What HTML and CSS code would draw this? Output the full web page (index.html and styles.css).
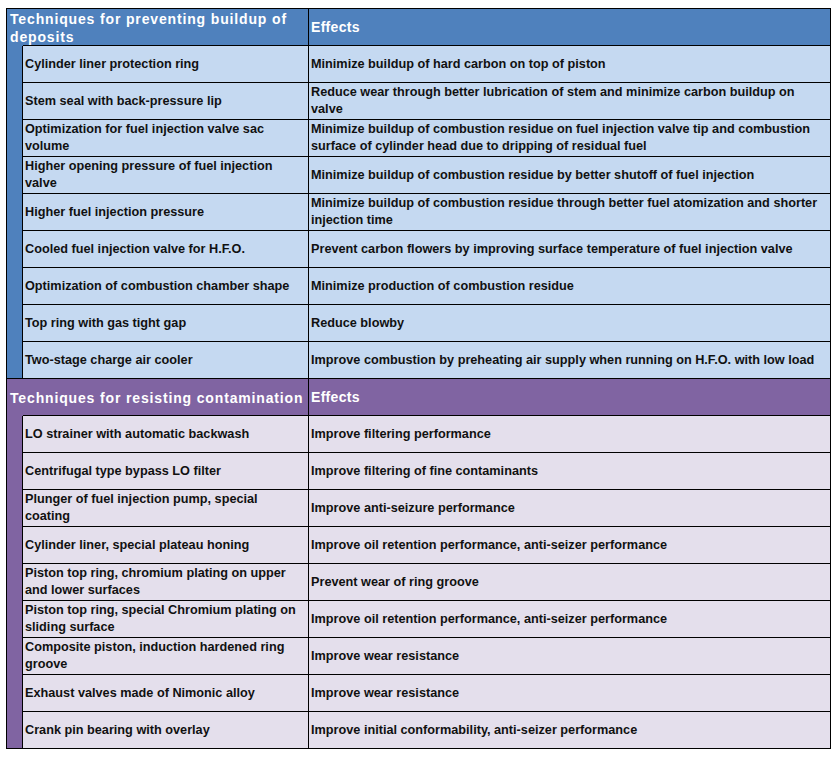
FILE: index.html
```html
<!DOCTYPE html>
<html lang="en">
<head>
<meta charset="utf-8">
<title>Techniques</title>
<link rel="stylesheet" href="styles.css">
</head>
<body>
<table class="grid">
  <colgroup>
    <col class="c-strip">
    <col class="c-tech">
    <col class="c-eff">
  </colgroup>
  <tbody class="sec blue">
    <tr class="head">
      <th colspan="2" class="h-tech">Techniques for preventing buildup of deposits</th>
      <th class="h-eff">Effects</th>
    </tr>
    <tr>
      <td class="strip" rowspan="9"></td>
      <td>Cylinder liner protection ring</td>
      <td>Minimize buildup of hard carbon on top of piston</td>
    </tr>
    <tr>
      <td>Stem seal with back-pressure lip</td>
      <td>Reduce wear through better lubrication of stem and minimize carbon buildup on valve</td>
    </tr>
    <tr>
      <td>Optimization for fuel injection valve sac volume</td>
      <td>Minimize buildup of combustion residue on fuel injection valve tip and combustion surface of cylinder head due to dripping of residual fuel</td>
    </tr>
    <tr>
      <td>Higher opening pressure of fuel injection valve</td>
      <td>Minimize buildup of combustion residue by better shutoff of fuel injection</td>
    </tr>
    <tr>
      <td>Higher fuel injection pressure</td>
      <td>Minimize buildup of combustion residue through better fuel atomization and shorter injection time</td>
    </tr>
    <tr>
      <td>Cooled fuel injection valve for H.F.O.</td>
      <td>Prevent carbon flowers by improving surface temperature of fuel injection valve</td>
    </tr>
    <tr>
      <td>Optimization of combustion chamber shape</td>
      <td>Minimize production of combustion residue</td>
    </tr>
    <tr>
      <td>Top ring with gas tight gap</td>
      <td>Reduce blowby</td>
    </tr>
    <tr>
      <td>Two-stage charge air cooler</td>
      <td class="nowrap">Improve combustion by preheating air supply when running on H.F.O. with low load</td>
    </tr>
  </tbody>
  <tbody class="sec purple">
    <tr class="head">
      <th colspan="2" class="h-tech">Techniques for resisting contamination</th>
      <th class="h-eff">Effects</th>
    </tr>
    <tr>
      <td class="strip" rowspan="9"></td>
      <td>LO strainer with automatic backwash</td>
      <td>Improve filtering performance</td>
    </tr>
    <tr>
      <td>Centrifugal type bypass LO filter</td>
      <td>Improve filtering of fine contaminants</td>
    </tr>
    <tr>
      <td>Plunger of fuel injection pump, special coating</td>
      <td>Improve anti-seizure performance</td>
    </tr>
    <tr>
      <td>Cylinder liner, special plateau honing</td>
      <td>Improve oil retention performance, anti-seizer performance</td>
    </tr>
    <tr>
      <td>Piston top ring, chromium plating on upper and lower surfaces</td>
      <td>Prevent wear of ring groove</td>
    </tr>
    <tr>
      <td>Piston top ring, special Chromium plating on sliding surface</td>
      <td>Improve oil retention performance, anti-seizer performance</td>
    </tr>
    <tr>
      <td>Composite piston, induction hardened ring groove</td>
      <td>Improve wear resistance</td>
    </tr>
    <tr>
      <td>Exhaust valves made of Nimonic alloy</td>
      <td>Improve wear resistance</td>
    </tr>
    <tr>
      <td>Crank pin bearing with overlay</td>
      <td>Improve initial conformability, anti-seizer performance</td>
    </tr>
  </tbody>
</table>
</body>
</html>
```
FILE: styles.css
```css
html, body {
  margin: 0;
  padding: 0;
  background: #ffffff;
}
body {
  padding: 8px 0 0 6px;
  font-family: "Liberation Sans", Arial, sans-serif;
}
.grid {
  border-collapse: separate;
  border-spacing: 0;
  table-layout: fixed;
  width: 825px;
  border-top: 1px solid #000;
  border-left: 1px solid #000;
}
.c-strip { width: 16px; }
.c-tech { width: 286px; }
.c-eff { width: 522px; }

.grid tr { height: 37px; }
.grid td, .grid th {
  box-sizing: border-box;
  border-right: 1px solid #000;
  border-bottom: 1px solid #000;
  padding: 0 2px 0 2px;
  vertical-align: middle;
  text-align: left;
  font-size: 12.7px;
  line-height: 17px;
  font-weight: bold;
  color: #111;
  overflow: visible;
}
.grid td.nowrap { white-space: nowrap; }

.grid th {
  color: #fff;
  font-size: 14px;
  line-height: 18px;
}
.grid th.h-tech {
  border-right: 1px solid #000;
  border-bottom: none;
  padding-left: 3px;
  padding-right: 2px;
  letter-spacing: 0.85px;
}
.grid th.h-eff {
  padding-left: 2px;
  letter-spacing: 0.3px;
}

.blue .head th { background-color: #4f81bd; }
.blue .head th.h-tech {
  background: linear-gradient(#000, #000) no-repeat right bottom / calc(100% - 16px) 1px, #4f81bd;
}
.blue td { background: #c5d9f1; }
.blue td.strip { background: #4f81bd; }

.purple .head th { background-color: #8064a2; }
.purple .head th.h-tech {
  background: linear-gradient(#000, #000) no-repeat right bottom / calc(100% - 16px) 1px, #8064a2;
}
.purple td { background: #e4dfec; }
.purple td.strip { background: #8064a2; }
```
